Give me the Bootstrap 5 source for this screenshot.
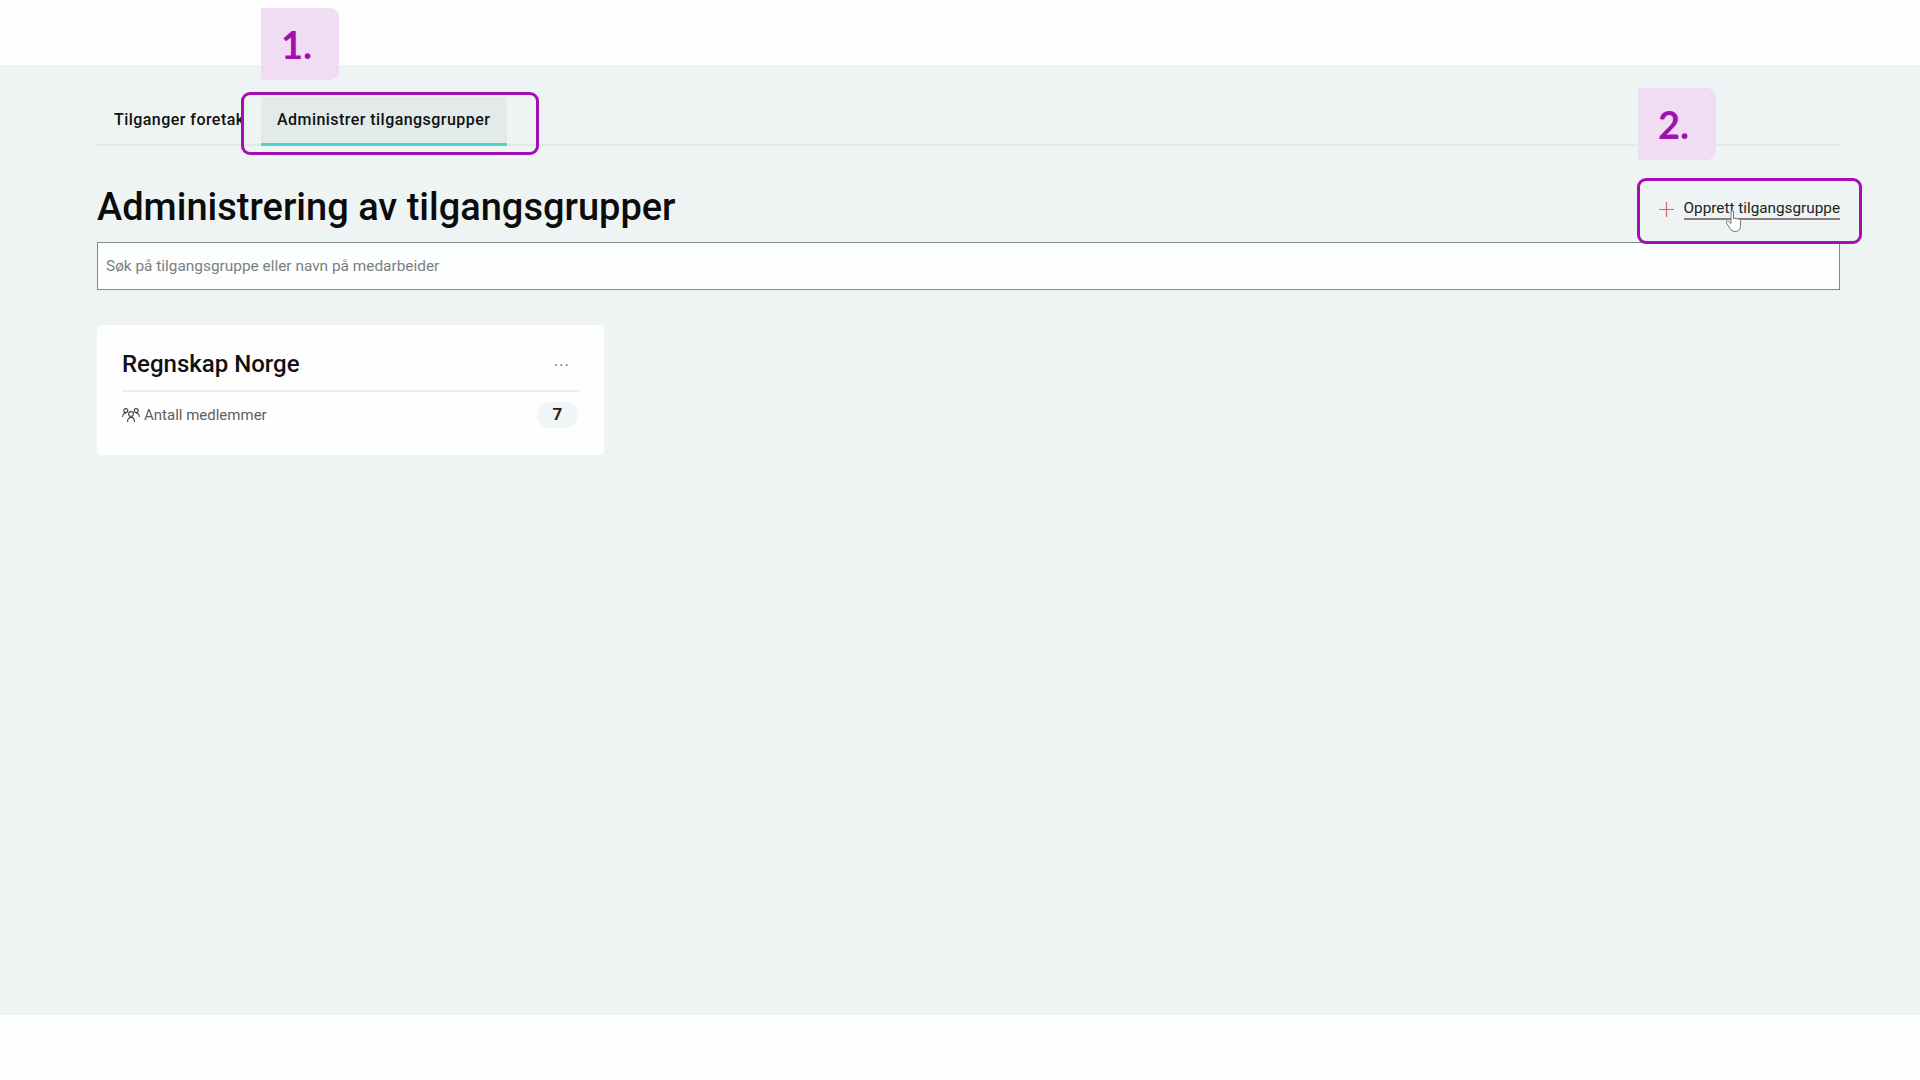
<!doctype html>
<html lang="no">
<head>
<meta charset="utf-8">
<title>Administrering av tilgangsgrupper</title>
<link rel="stylesheet" href="https://cdn.jsdelivr.net/npm/bootstrap@5.3.0/dist/css/bootstrap.min.css">
<style>
body{background:#fefefe;font-family:Roboto,"Liberation Sans",sans-serif;color:#111;overflow:hidden;height:1080px}
.top-gap{height:65px}
.band{background:#eef4f4;height:950px;padding:32px 80px 0 97px;position:relative}
.tab-row{height:49px;border-bottom:2px solid #e3e9e9;flex-wrap:nowrap}
.tab-link{display:block;height:49px;color:#111;font-size:16px;font-weight:500;letter-spacing:.45px;line-height:19px;padding:13px 0 0 17px;white-space:nowrap;text-decoration:none}
.tab-first{width:164px}
.tab-active{background:#e2eaea;border-bottom:3px solid #4fd2d8;padding-left:16px;width:246px}
.head-row{height:96px}
.page-title{font-size:38px;font-weight:500;letter-spacing:0;margin:39px 0 0;color:#0c0c0c}
.create-link{color:#222;font-size:15.3px;text-decoration:none;margin-top:53px}
.plus-mark{margin-right:10px}
.create-label{border-bottom:2px solid #8c7b7b;line-height:19px;display:inline-block;padding-bottom:0}
.search-box.form-control{height:48px;border:1px solid #85898a;border-radius:0;background:#fdfefe;font-size:15.4px;padding:0 8px;color:#333}
.search-box.form-control::placeholder{color:#7b7f80}
.group-card.card{width:507px;height:130px;margin-top:35px;border:0;border-radius:5px;background:#fefefe;padding:0 25px}
.card-head{height:67px;border-bottom:2px solid #e8eded;padding-top:13px}
.card-title-text{font-size:24px;font-weight:500;margin:0;color:#111}
.more-dots{color:#777;font-size:17px;letter-spacing:1px;line-height:1;margin-right:9px;margin-top:2px}
.card-line{height:46px;font-size:15px;color:#5c6060}
.count-pill.badge{background:#f2f5f5;color:#222;font-size:17px;font-weight:700;width:41px;height:26px;padding:4px 0 0;border-radius:13px;margin-right:1px}
.note-tag{position:absolute;width:78px;height:72px;background:#f0dcf3;border-radius:0 9px 9px 0;color:#a010b0;font-size:38px;font-weight:700;font-family:Lato,Roboto,sans-serif;display:flex;align-items:center;justify-content:center;padding-right:7px}
.note-one{left:261px;top:8px}
.note-two{left:1638px;top:88px}
.note-frame{position:absolute;border:3px solid #a30fb0;border-radius:9px;pointer-events:none}
.frame-one{left:241px;top:92px;width:298px;height:63px}
.frame-two{left:1637px;top:178px;width:225px;height:66px}
.hand-cursor{position:absolute;left:1724px;top:209px;width:20px;height:24px}
</style>
</head>
<body>
<div class="top-gap"></div>
<main class="band">
  <ul class="nav tab-row">
    <li class="nav-item"><a class="tab-link tab-first" href="#">Tilganger foretak</a></li>
    <li class="nav-item"><a class="tab-link tab-active" href="#">Administrer tilgangsgrupper</a></li>
  </ul>
  <div class="d-flex justify-content-between align-items-start head-row">
    <h1 class="page-title">Administrering av tilgangsgrupper</h1>
    <a class="create-link d-flex align-items-center" href="#">
      <svg class="plus-mark" width="15" height="15" viewBox="0 0 15 15"><path d="M7.5 0v15M0 7.5h15" stroke="#e2605f" stroke-width="1.2" fill="none"/></svg>
      <span class="create-label">Opprett tilgangsgruppe</span>
    </a>
  </div>
  <input class="form-control search-box" type="text" placeholder="Søk på tilgangsgruppe eller navn på medarbeider">
  <section class="card group-card">
    <div class="d-flex justify-content-between align-items-center card-head">
      <h2 class="card-title-text">Regnskap Norge</h2>
      <span class="more-dots">···</span>
    </div>
    <div class="d-flex justify-content-between align-items-center card-line">
      <span class="d-flex align-items-center gap-1">
        <svg width="18" height="16" viewBox="0 0 18 16" fill="none" stroke="#444" stroke-width="1.1"><circle cx="9" cy="7" r="2.4"/><path d="M5.5 15c0-3 1.5-4.6 3.500-4.600s3.500 1.600 3.500 4.600"/><circle cx="3.800" cy="3.600" r="2"/><path d="M.6 10c0-2.500 1.300-3.900 3.200-3.900"/><circle cx="14.200" cy="3.600" r="2"/><path d="M17.400 10c0-2.500-1.300-3.900-3.200-3.900"/></svg>
        Antall medlemmer
      </span>
      <span class="badge count-pill">7</span>
    </div>
  </section>
</main>
<div class="note-tag note-one">1.</div>
<div class="note-tag note-two">2.</div>
<div class="note-frame frame-one"></div>
<div class="note-frame frame-two"></div>
<svg class="hand-cursor" viewBox="0 0 20 24"><path d="M7 3c0-1.700 2.500-1.700 2.500 0v7c.3-1.400 2.400-1.300 2.500.2.300-1.200 2.300-1.100 2.400.4.400-.9 2.100-.7 2.100.8v5.500c0 3.500-2.200 5.600-5.300 5.600-2.600 0-4-1-5.300-3.200L2.500 14c-.9-1.700 1-2.800 2.300-1.500L7 14.500z" fill="#fff" stroke="#777" stroke-width="1"/></svg>
<script src="https://cdn.jsdelivr.net/npm/bootstrap@5.3.0/dist/js/bootstrap.bundle.min.js"></script>
</body>
</html>
